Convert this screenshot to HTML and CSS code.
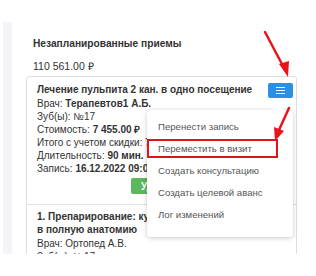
FILE: index.html
```html
<!DOCTYPE html>
<html>
<head>
    <link rel="stylesheet" href="styles.css">
</head>
<body>
    <div class="page">
        <div class="panel">
            <div class="strip"></div>
            <div class="content">
                <h4 class="title">Незапланированные приемы</h4>
                <div class="total">110 561.00 ₽</div>
                <div class="card">
                    <div class="visit">
                        <div class="visit-name">Лечение пульпита 2 кан. в одно посещение</div>
                        <div>Врач: <b>Терапевтов1 А.Б.</b></div>
                        <div>Зуб(ы): №17</div>
                        <div>Стоимость: <b>7 455.00 ₽</b></div>
                        <div>Итого с учетом скидки: <b>7 455.00 ₽</b></div>
                        <div>Длительность: <b>90 мин.</b></div>
                        <div>Запись: <b>16.12.2022 09:00</b></div>
                        <div class="actions"><button class="btn-green">Удалить</button></div>
                    </div>
                    <div class="visit">
                        <div class="visit-name">1. Препарирование: культи под коронку<br>в полную анатомию</div>
                        <div>Врач: Ортопед А.В.</div>
                        <div>Зуб(ы): №17</div>
                    </div>

                    <button class="btn-menu">
                        <svg width="9" height="7" viewBox="0 0 9 7"><path d="M0 0.5h9M0 3.5h9M0 6.5h9" stroke="#fff" stroke-width="1"/></svg>
                    </button>
                    <div class="menu">
                        <div class="menu-item">Перенести запись</div>
                        <div class="menu-item marked">Переместить в визит</div>
                        <div class="menu-item">Создать консультацию</div>
                        <div class="menu-item">Создать целевой аванс</div>
                        <div class="menu-item">Лог изменений</div>
                    </div>
                </div>
            </div>
        </div>
    </div>

    <svg class="arrows" width="316" height="276" viewBox="0 0 316 276">
        <path d="M265 32 L283 66" stroke="#e8141c" stroke-width="2.5" stroke-linecap="round"/>
        <path d="M279 64 L288 77 L289 61 Z" fill="#e8141c"/>
        <path d="M289 108 L279 130" stroke="#e8141c" stroke-width="2.5" stroke-linecap="round"/>
        <path d="M274 127 L275 141 L284 131 Z" fill="#e8141c"/>
    </svg>
</body>
</html>
```
FILE: styles.css
```css
body {
    margin: 0;
    background: #fff;
    font-family: "Liberation Sans", Arial, sans-serif;
    font-size: 10px;
    color: #333;
}
.page {
    padding-top: 22px;
}
.panel {
    display: flex;
    height: 232px;
    overflow: hidden;
}
.strip {
    width: 9px;
    margin-left: 3px;
    background: #f3f4f7;
}
.content {
    flex: 1;
    padding: 15px 19px 0 14px;
}
.title {
    margin: 0 0 10px 7px;
    font-size: 10.2px;
    line-height: 13px;
    font-weight: bold;
    color: #333;
}
.total {
    margin: 0 0 3px 7px;
    font-size: 10.5px;
    line-height: 13px;
}
.card {
    position: relative;
    border: 1px solid #dedede;
    border-radius: 3px;
}
.visit {
    padding: 6px 10px 10px;
    line-height: 13px;
}
.visit + .visit {
    border-top: 1px solid #e2e2e2;
    padding-top: 5px;
}
.visit-name {
    font-weight: bold;
    white-space: nowrap;
    margin-bottom: 1px;
}
.actions {
    margin-top: 3px;
    text-align: center;
}
.btn-green {
    background: #5cb85c;
    color: #fff;
    border: none;
    border-radius: 2px;
    font-family: inherit;
    font-size: 10px;
    font-weight: bold;
    height: 16px;
    padding: 0 8px;
    width: 62px;
}
.btn-menu {
    position: absolute;
    top: 6px;
    right: 3px;
    width: 25px;
    height: 15px;
    border: none;
    border-radius: 2px;
    background: #2b8fe3;
    display: flex;
    align-items: center;
    justify-content: center;
    padding: 0;
}
.menu {
    position: absolute;
    top: 33px;
    right: 3px;
    width: 146px;
    padding: 6px 0 11px;
    background: #fff;
    border-radius: 4px;
    box-shadow: 0 1px 5px rgba(0, 0, 0, 0.22);
}
.menu::before {
    content: "";
    position: absolute;
    top: -5px;
    right: 10px;
    border-left: 5px solid transparent;
    border-right: 5px solid transparent;
    border-bottom: 5px solid #fff;
}
.menu-item {
    position: relative;
    height: 22px;
    line-height: 22px;
    padding-left: 11px;
    font-size: 9.6px;
    color: #555;
}
.marked::after {
    content: "";
    position: absolute;
    left: 0;
    top: 1px;
    width: 127px;
    height: 15px;
    border: 2px solid #e0141b;
}
.arrows {
    position: absolute;
    left: 0;
    top: 0;
    pointer-events: none;
}
```
